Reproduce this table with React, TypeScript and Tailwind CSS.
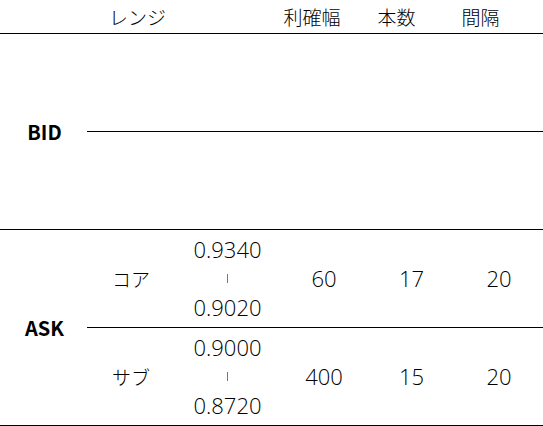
import React from "react";

const cjk = { fontFamily: '"Noto Sans CJK JP", "Noto Sans", sans-serif' };
const num = { fontFamily: '"Open Sans", "Noto Sans CJK JP", sans-serif' };

function Num({ children }: { children: React.ReactNode }) {
  return (
    <span className="text-[22px] font-light" style={num}>
      {children}
    </span>
  );
}

function RangeRow({
  label,
  hi,
  lo,
  width,
  count,
  interval,
  border,
}: {
  label: string;
  hi: string;
  lo: string;
  width: string;
  count: string;
  interval: string;
  border: boolean;
}) {
  return (
    <div className={`flex h-[98px] ${border ? "border-b border-black" : ""}`}>
      <div className="w-[88px] flex items-center justify-center font-light">{label}</div>
      <div className="w-[105px] flex flex-col items-center justify-center">
        <div className="h-[29px] flex items-center">
          <Num>{hi}</Num>
        </div>
        <div className="h-[29px] flex items-center">
          <div className="w-px h-[9px] bg-[#777]" />
        </div>
        <div className="h-[29px] flex items-center">
          <Num>{lo}</Num>
        </div>
      </div>
      <div className="w-[88px] flex items-center justify-center">
        <Num>{width}</Num>
      </div>
      <div className="w-[87px] flex items-center justify-center">
        <Num>{count}</Num>
      </div>
      <div className="w-[88px] flex items-center justify-center">
        <Num>{interval}</Num>
      </div>
    </div>
  );
}

export default function App() {
  return (
    <div
      className="w-[543px] h-[426px] bg-white text-black text-[19px] leading-none overflow-hidden"
      style={cjk}
    >
      {/* header */}
      <div className="flex h-[34px] border-b border-black items-center font-light">
        <div className="w-[101px]" />
        <div className="w-[73px] text-center">レンジ</div>
        <div className="w-[98px]" />
        <div className="w-[80px] text-center">利確幅</div>
        <div className="w-[14.5px]" />
        <div className="w-[60px] text-center">本数</div>
        <div className="w-[24px]" />
        <div className="w-[60px] text-center">間隔</div>
      </div>

      {/* BID */}
      <div className="flex h-[196px] border-b border-black">
        <div className="w-[89px] flex items-center justify-center text-[20px] font-bold">
          BID
        </div>
        <div className="flex-1 flex flex-col -ml-[2px]">
          <div className="h-[98px] border-b border-black" />
          <div className="flex-1" />
        </div>
      </div>

      {/* ASK */}
      <div className="flex h-[196px] border-b border-black">
        <div className="w-[89px] flex items-center justify-center text-[20px] font-bold">
          ASK
        </div>
        <div className="flex-1 flex flex-col -ml-[2px]">
          <RangeRow
            label="コア"
            hi="0.9340"
            lo="0.9020"
            width="60"
            count="17"
            interval="20"
            border
          />
          <RangeRow
            label="サブ"
            hi="0.9000"
            lo="0.8720"
            width="400"
            count="15"
            interval="20"
            border={false}
          />
        </div>
      </div>
    </div>
  );
}
